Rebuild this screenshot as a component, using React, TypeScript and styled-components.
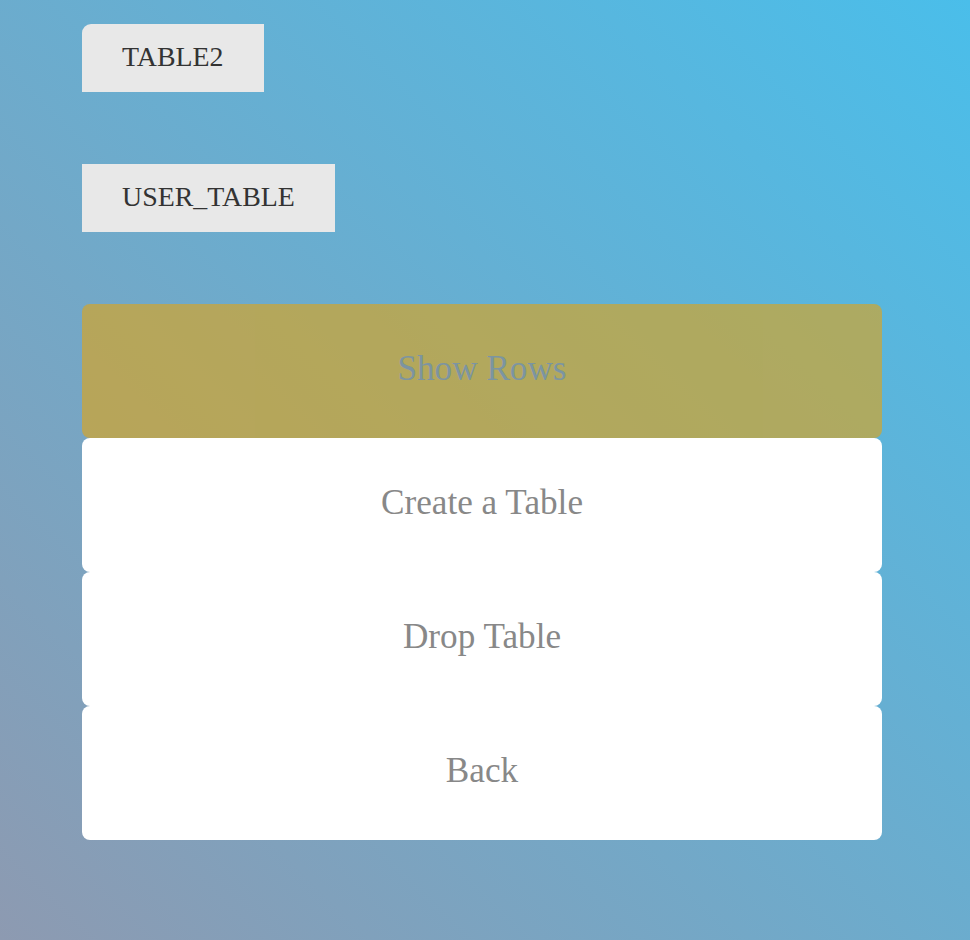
import React from "react";
import styled, { createGlobalStyle } from "styled-components";

const Global = createGlobalStyle`
  html, body { margin: 0; padding: 0; height: 100%; }
  body {
    min-height: 100vh;
    background: linear-gradient(to top right, #8d9ab1 0%, #4abeea 100%);
    font-family: "Liberation Serif", "Times New Roman", serif;
  }
`;

const Page = styled.div`
  padding: 24px 88px 40px 82px;
  display: flex;
  flex-direction: column;
  align-items: flex-start;
`;

const TagList = styled.div`
  display: flex;
  flex-direction: column;
  align-items: flex-start;
  gap: 72px;
  margin-bottom: 72px;
`;

const Tag = styled.div<{ $rounded?: boolean }>`
  box-sizing: border-box;
  height: 68px;
  padding: 0 40px 3px;
  display: flex;
  align-items: center;
  background: #e8e8e8;
  color: #333;
  font-size: 27.9px;
  border-top-left-radius: ${(p) => (p.$rounded ? "9px" : "0")};
`;

const Menu = styled.div`
  width: 800px;
  display: flex;
  flex-direction: column;
`;

const MenuButton = styled.div<{ $active?: boolean }>`
  box-sizing: border-box;
  height: 134px;
  padding-bottom: 4px;
  border-radius: 8px;
  display: flex;
  align-items: center;
  justify-content: center;
  font-size: 35.2px;
  color: #888;
  background: ${(p) => (p.$active ? "goldenrod" : "#fff")};
  opacity: ${(p) => (p.$active ? 0.65 : 1)};
  cursor: pointer;
`;

export default function App() {
  return (
    <>
      <Global />
      <Page>
        <TagList>
          <Tag $rounded>TABLE2</Tag>
          <Tag>USER_TABLE</Tag>
        </TagList>
        <Menu>
          <MenuButton $active>Show Rows</MenuButton>
          <MenuButton>Create a Table</MenuButton>
          <MenuButton>Drop Table</MenuButton>
          <MenuButton>Back</MenuButton>
        </Menu>
      </Page>
    </>
  );
}
